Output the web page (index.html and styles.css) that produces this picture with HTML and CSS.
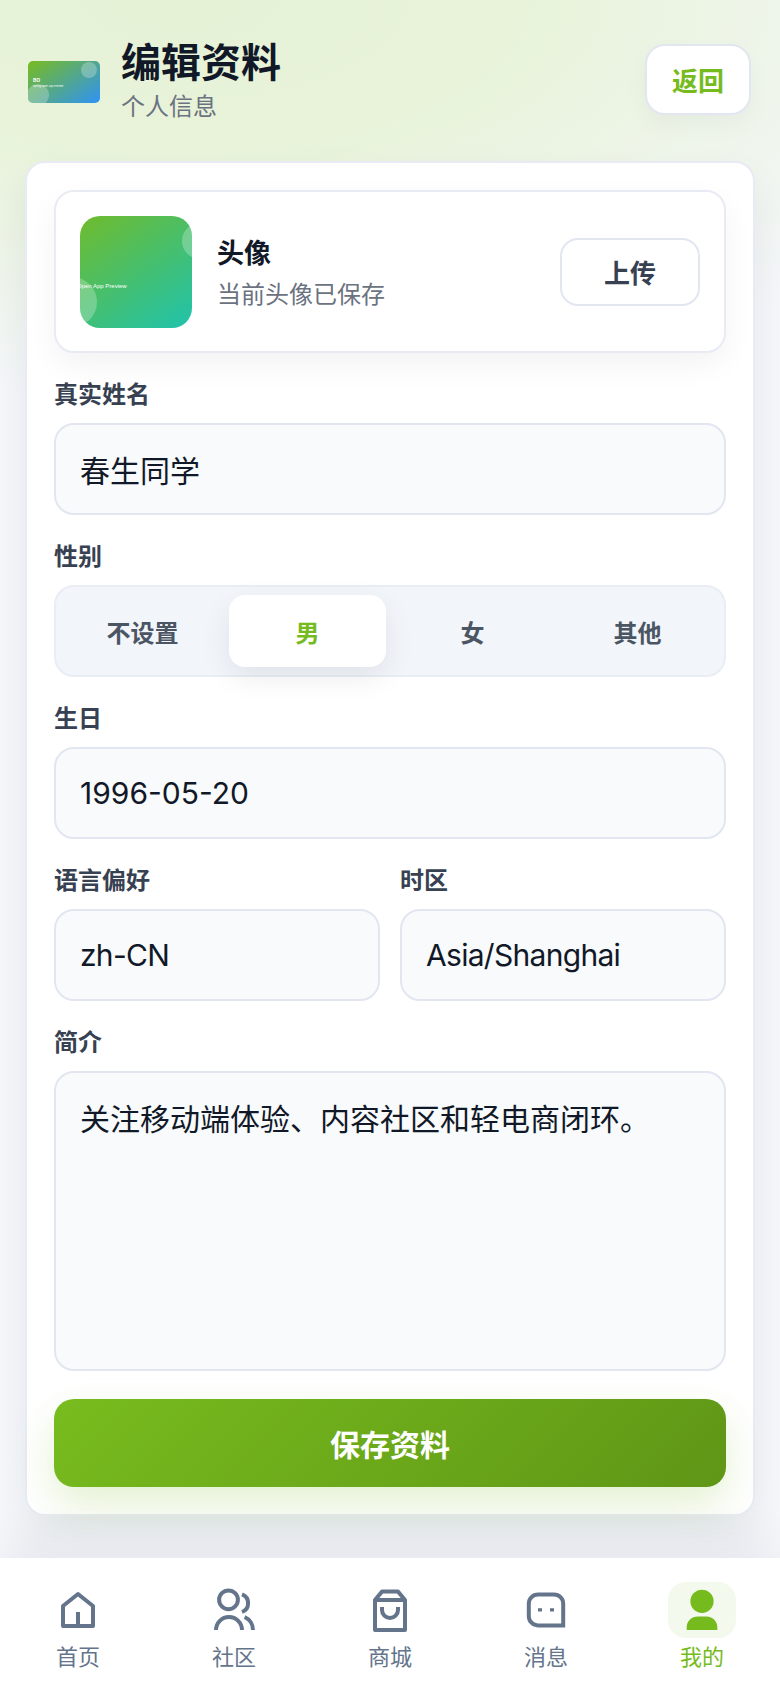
FILE: index.html
```html
<!DOCTYPE html>
<html lang="zh-CN">
<head>
    <meta charset="UTF-8">
    <meta name="viewport" content="width=device-width, initial-scale=1.0">
    <title>编辑资料</title>
    <link rel="stylesheet" href="styles.css">
</head>
<body>
<div class="page">
    <header class="top-bar">
        <div class="top-left">
            <div class="logo-thumb">
                <span class="bubble logo-bubble-a"></span>
                <span class="bubble logo-bubble-b"></span>
                <span class="logo-mark">BO</span>
                <span class="logo-text">Spring Open App Preview</span>
            </div>
            <div>
                <h1 class="page-title">编辑资料</h1>
                <p class="page-sub">个人信息</p>
            </div>
        </div>
        <button class="back-btn">返回</button>
    </header>

    <main class="form-card">
        <section class="avatar-row">
            <div class="avatar-thumb">
                <span class="bubble avatar-bubble-a"></span>
                <span class="bubble avatar-bubble-b"></span>
                <span class="avatar-text">Open App Preview</span>
            </div>
            <div class="avatar-info">
                <div class="avatar-name">头像</div>
                <div class="avatar-note">当前头像已保存</div>
            </div>
            <button class="upload-btn">上传</button>
        </section>

        <div class="field">
            <label class="field-label">真实姓名</label>
            <input class="text-input" value="春生同学">
        </div>

        <div class="field">
            <label class="field-label">性别</label>
            <div class="segment">
                <div class="segment-item">不设置</div>
                <div class="segment-item active">男</div>
                <div class="segment-item">女</div>
                <div class="segment-item">其他</div>
            </div>
        </div>

        <div class="field">
            <label class="field-label">生日</label>
            <input class="text-input" value="1996-05-20">
        </div>

        <div class="field-pair">
            <div class="field">
                <label class="field-label">语言偏好</label>
                <input class="text-input latin" value="zh-CN">
            </div>
            <div class="field">
                <label class="field-label">时区</label>
                <input class="text-input latin" value="Asia/Shanghai">
            </div>
        </div>

        <div class="field">
            <label class="field-label">简介</label>
            <textarea class="text-input text-area">关注移动端体验、内容社区和轻电商闭环。</textarea>
        </div>

        <button class="save-btn">保存资料</button>
    </main>
</div>

<nav class="tab-bar">
    <div class="tab">
        <span class="tab-icon">
            <svg viewBox="0 0 24 24" width="48" height="48" fill="none" stroke="currentColor" stroke-width="2" stroke-linejoin="round">
                <path d="M4.500 10 12 4l7.500 6v10h-15z"/>
                <path d="M12 20v-7"/>
            </svg>
        </span>
        <span class="tab-label">首页</span>
    </div>
    <div class="tab">
        <span class="tab-icon">
            <svg viewBox="0 0 24 24" width="48" height="48" fill="none" stroke="currentColor" stroke-width="2">
                <circle cx="9.250" cy="6.900" r="4.700"/>
                <path d="M3 22a6.500 6.500 0 0 1 13 0"/>
                <path d="M16 4.200a4.700 4.700 0 0 1 0 8.800"/>
                <path d="M17.300 15.500a7 7 0 0 1 4.200 6.500"/>
            </svg>
        </span>
        <span class="tab-label">社区</span>
    </div>
    <div class="tab">
        <span class="tab-icon">
            <svg viewBox="0 0 24 24" width="48" height="48" fill="none" stroke="currentColor" stroke-width="2" stroke-linejoin="round">
                <path d="M4.500 7 8 2.800h8L19.500 7v15h-15z"/>
                <path d="M4.500 7h15"/>
                <path d="M8 10.500V12a4 4 0 0 0 8 0v-1.500"/>
            </svg>
        </span>
        <span class="tab-label">商城</span>
    </div>
    <div class="tab">
        <span class="tab-icon">
            <svg viewBox="0 0 24 24" width="48" height="48" fill="none" stroke="currentColor" stroke-width="2">
                <path d="M8 4.200h8a4.600 4.600 0 0 1 4.600 4.600v10.900H8a4.600 4.600 0 0 1-4.600-4.600V8.800A4.600 4.600 0 0 1 8 4.200z"/>
                <path d="M8 11.900h2M14 11.900h2" stroke-width="1.600"/>
            </svg>
        </span>
        <span class="tab-label">消息</span>
    </div>
    <div class="tab current">
        <span class="tab-icon">
            <svg viewBox="0 0 24 24" width="48" height="48" fill="currentColor">
                <circle cx="12" cy="7.650" r="5.800"/>
                <path d="M4.350 22v-1.500a5.500 5.300 0 0 1 5.500-5.300h4.300a5.500 5.300 0 0 1 5.500 5.300V22z"/>
            </svg>
        </span>
        <span class="tab-label">我的</span>
    </div>
</nav>
</body>
</html>
```

FILE: styles.css
```css
* {
    box-sizing: border-box;
}

html, body {
    margin: 0;
    padding: 0;
}

body {
    width: 780px;
    height: 1688px;
    overflow: hidden;
    display: flex;
    flex-direction: column;
    font-family: Inter, "Noto Sans CJK SC", sans-serif;
    color: #0f172a;
    background:
        radial-gradient(ellipse 900px 400px at 180px 0, #e6f2d6 0%, #e8f3da 38%, rgba(232, 243, 218, 0) 100%),
        #f5f7fb;
}

.page {
    flex: 1;
    padding: 44px 25px 0 25px;
}

.top-bar {
    display: flex;
    align-items: center;
    justify-content: space-between;
    height: 71px;
    padding: 0 4px 0 3px;
    margin-bottom: 46px;
}

.top-left {
    display: flex;
    align-items: center;
    gap: 21px;
}

.bubble {
    position: absolute;
    border-radius: 50%;
    background: rgba(255, 255, 255, 0.25);
}

.logo-thumb {
    position: relative;
    width: 72px;
    height: 42px;
    margin-top: 4px;
    overflow: hidden;
    border-radius: 5px;
    background: linear-gradient(145deg, #78bc1e, #2f93f5);
    color: #fff;
}

.logo-bubble-a {
    width: 16px;
    height: 16px;
    top: 1px;
    left: 53px;
}

.logo-bubble-b {
    width: 22px;
    height: 22px;
    top: 23px;
    left: -1px;
}

.logo-mark {
    position: absolute;
    top: 16px;
    left: 5px;
    font-size: 5px;
    line-height: 6px;
    font-weight: 700;
}

.logo-text {
    position: absolute;
    top: 24px;
    left: 5px;
    font-size: 2.500px;
    line-height: 4px;
    white-space: nowrap;
}

.page-title {
    margin: 1px 0 0;
    font-size: 40px;
    line-height: 50px;
    font-weight: 700;
    color: #111827;
}

.page-sub {
    margin: 3px 0 0;
    font-size: 24px;
    line-height: 32px;
    color: #6b7280;
}

.back-btn {
    width: 106px;
    height: 71px;
    border: 2px solid #e2e6f0;
    border-radius: 20px;
    background: #fff;
    font: 700 26px Inter, "Noto Sans CJK SC", sans-serif;
    color: #76bb1e;
    box-shadow: 0 10px 24px rgba(15, 23, 42, 0.04);
}

.form-card {
    height: 1355px;
    padding: 27px 27px 0 27px;
    border: 2px solid #e8ebf3;
    border-radius: 20px;
    background: #fff;
    box-shadow: 0 20px 40px rgba(15, 23, 42, 0.07);
}

.avatar-row {
    display: flex;
    align-items: center;
    height: 163px;
    margin-bottom: 1px;
    padding: 0 24px;
    border: 2px solid #e8ebf3;
    border-radius: 20px;
    background: #fff;
    box-shadow: 0 12px 30px rgba(15, 23, 42, 0.05);
}

.avatar-thumb {
    position: relative;
    flex: none;
    width: 112px;
    height: 112px;
    overflow: hidden;
    border-radius: 20px;
    background: linear-gradient(145deg, #6fbb2c, #1fc3ad);
    color: #fff;
}

.avatar-bubble-a {
    width: 36px;
    height: 36px;
    top: 7px;
    left: 102px;
}

.avatar-bubble-b {
    width: 50px;
    height: 50px;
    top: 61px;
    left: -33px;
}

.avatar-text {
    position: absolute;
    top: 67px;
    left: -3px;
    font-family: "Liberation Sans", sans-serif;
    font-size: 6px;
    line-height: 6px;
    white-space: nowrap;
}

.avatar-info {
    flex: 1;
    margin-left: 25px;
}

.avatar-name {
    margin-top: 3px;
    font-size: 27px;
    line-height: 36px;
    font-weight: 700;
    color: #111827;
}

.avatar-note {
    margin-top: 7px;
    font-size: 24px;
    line-height: 32px;
    color: #6b7280;
}

.upload-btn {
    width: 140px;
    height: 68px;
    border: 2px solid #e2e6f0;
    border-radius: 18px;
    background: #fff;
    font: 700 26px Inter, "Noto Sans CJK SC", sans-serif;
    color: #374151;
}

.field {
    margin-top: 26px;
}

.field-label {
    display: block;
    margin-bottom: 12px;
    font-size: 24px;
    line-height: 32px;
    font-weight: 600;
    color: #374151;
}

.text-input {
    display: block;
    width: 100%;
    height: 92px;
    padding: 0 24px;
    border: 2px solid #e2e6f0;
    border-radius: 20px;
    outline: none;
    background: #f8fafc;
    font: 400 30px Inter, "Noto Sans CJK SC", sans-serif;
    color: #111827;
}

.text-input.latin {
    letter-spacing: -0.7px;
}

.text-area {
    height: 300px;
    padding: 24px;
    line-height: 44px;
    resize: none;
}

.segment {
    display: grid;
    grid-template-columns: repeat(4, 1fr);
    gap: 8px;
    height: 92px;
    padding: 8px;
    border: 2px solid #e9edf4;
    border-radius: 20px;
    background: #f2f5fa;
}

.segment-item {
    display: flex;
    align-items: center;
    justify-content: center;
    border-radius: 16px;
    font-size: 24px;
    font-weight: 700;
    color: #4b5563;
}

.segment-item.active {
    background: #fff;
    color: #76bb1e;
    box-shadow: 0 10px 30px rgba(15, 23, 42, 0.08);
}

.field-pair {
    display: grid;
    grid-template-columns: 1fr 1fr;
    gap: 20px;
}

.save-btn {
    display: block;
    width: 100%;
    height: 88px;
    margin-top: 28px;
    border: 0;
    border-radius: 20px;
    background: linear-gradient(135deg, #78bc1e, #5f9616);
    font: 700 30px Inter, "Noto Sans CJK SC", sans-serif;
    color: #fff;
    box-shadow: 0 18px 40px rgba(118, 187, 30, 0.2);
}

.tab-bar {
    display: grid;
    grid-template-columns: repeat(5, 1fr);
    height: 130px;
    padding-top: 24px;
    background: #fff;
    box-shadow: 0 -20px 40px rgba(15, 23, 42, 0.05);
}

.tab {
    display: flex;
    flex-direction: column;
    align-items: center;
    color: #64748b;
}

.tab-icon {
    display: flex;
    align-items: center;
    justify-content: center;
    width: 68px;
    height: 56px;
    border-radius: 18px;
}

.tab.current {
    color: #76bb1e;
}

.tab.current .tab-icon {
    background: #f3f9ec;
}

.tab-label {
    margin-top: 4px;
    font-size: 22px;
    line-height: 30px;
}
```
